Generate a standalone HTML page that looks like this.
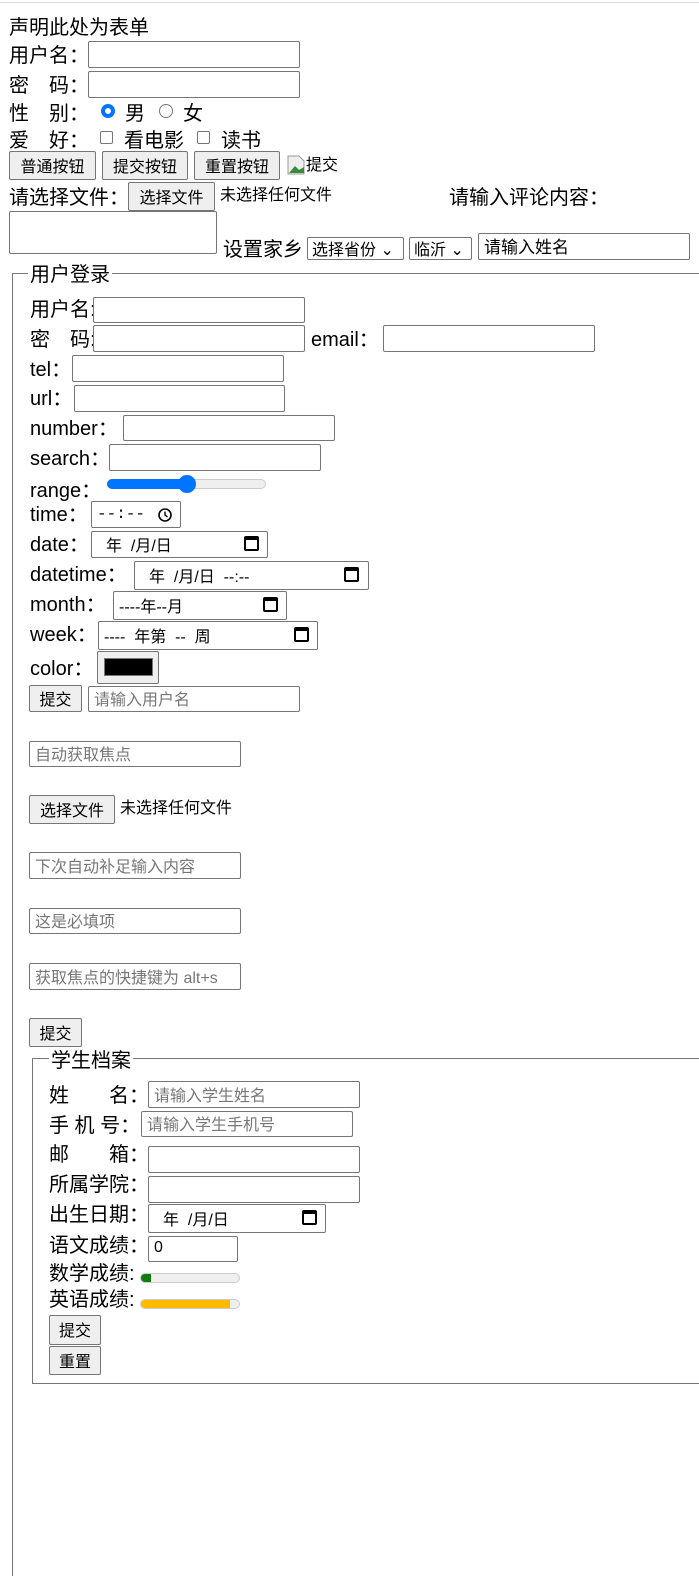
<!DOCTYPE html>
<html><head><meta charset="utf-8"><style>
*{box-sizing:border-box;margin:0;padding:0}
html,body{width:699px;height:1576px;background:#fff;overflow:hidden;position:relative;font-family:"Liberation Sans","Noto Sans CJK SC",sans-serif;color:#000}
.t{position:absolute;font-size:20px;line-height:22px;white-space:pre;transform:translateY(2px)}
.s{position:absolute;font-size:16px;line-height:18px;white-space:pre}
.i{position:absolute;border:1px solid #767676;border-radius:2px;background:#fff;font-size:16px;padding-left:5px;white-space:pre;overflow:hidden;display:flex;align-items:center;padding-bottom:2px}
.ph{color:#777}
.b{position:absolute;border:1px solid #767676;border-radius:2px;background:#efefef;font-size:16px;white-space:pre;display:flex;align-items:center;justify-content:center;padding-bottom:2px}
.rd{position:absolute;width:14px;height:14px;border:1px solid #767676;border-radius:50%;background:#fff}
.cb{position:absolute;width:13px;height:13px;border:1px solid #767676;border-radius:2px;background:#fff}
.cal{position:absolute;width:15px;height:15px;border:2px solid #000;border-top-width:4px;border-radius:2px}
.fs{position:absolute;border:1px solid #767676}
.lg{position:absolute;background:#fff;padding:0 2px;font-size:20px;line-height:22px}
</style></head><body>
<div style="position:absolute;left:0;top:2px;width:699px;height:1px;background:#ddd"></div>
<div class="t" style="left:9px;top:15px">声明此处为表单</div>
<div class="t" style="left:9px;top:43px">用户名：</div>
<div class="i" style="left:88px;top:41px;width:212px;height:27px"></div>
<div class="t" style="left:9px;top:73px">密　码：</div>
<div class="i" style="left:88px;top:71px;width:212px;height:27px"></div>
<div class="t" style="left:9px;top:101px">性　别：</div>
<div class="rd" style="left:101px;top:104px;border:4px solid #0075ff"></div>
<div class="t" style="left:125px;top:101px">男</div>
<div class="rd" style="left:159px;top:104px"></div>
<div class="t" style="left:183px;top:101px">女</div>
<div class="t" style="left:9px;top:128px">爱　好：</div>
<div class="cb" style="left:100px;top:131px"></div>
<div class="t" style="left:124px;top:128px">看电影</div>
<div class="cb" style="left:197px;top:131px"></div>
<div class="t" style="left:221px;top:128px">读书</div>
<div class="b" style="left:9px;top:151px;width:87px;height:29px">普通按钮</div>
<div class="b" style="left:102px;top:151px;width:86px;height:29px">提交按钮</div>
<div class="b" style="left:194px;top:151px;width:86px;height:29px">重置按钮</div>
<svg style="position:absolute;left:287px;top:155px" width="19" height="20"><path d="M1 1h11l5 5v13H1z" fill="#eee" stroke="#999"/><path d="M2 18l6-7 4 4 5-3v6z" fill="#3a8a3a"/></svg>
<div class="s" style="left:306px;top:157px">提交</div>
<div class="t" style="left:9px;top:185px">请选择文件：</div>
<div class="b" style="left:128px;top:182px;width:87px;height:29px">选择文件</div>
<div class="s" style="left:220px;top:187px">未选择任何文件</div>
<div class="t" style="left:449px;top:185px">请输入评论内容：</div>
<div class="i" style="left:9px;top:211px;width:208px;height:43px"></div>
<div class="t" style="left:223px;top:237px">设置家乡</div>
<div class="i" style="left:307px;top:237px;width:97px;height:23px;padding-left:4px">选择省份 ⌄</div>
<div class="i" style="left:409px;top:237px;width:63px;height:23px;padding-left:4px">临沂 ⌄</div>
<div class="i" style="left:478px;top:233px;width:212px;height:27px;font-size:17px">请输入姓名</div>

<div class="fs" style="left:12px;top:273px;width:700px;height:1320px"></div>
<div class="lg" style="left:28px;top:264px">用户登录</div>
<div class="t" style="left:30px;top:297px">用户名:</div>
<div class="i" style="left:93px;top:297px;width:212px;height:26px"></div>
<div class="t" style="left:30px;top:327px">密　码:</div>
<div class="i" style="left:93px;top:325px;width:212px;height:27px"></div>
<div class="t" style="left:311px;top:327px">email：</div>
<div class="i" style="left:383px;top:325px;width:212px;height:27px"></div>
<div class="t" style="left:30px;top:357px">tel：</div>
<div class="i" style="left:72px;top:355px;width:212px;height:27px"></div>
<div class="t" style="left:30px;top:386px">url：</div>
<div class="i" style="left:74px;top:385px;width:211px;height:27px"></div>
<div class="t" style="left:30px;top:416px">number：</div>
<div class="i" style="left:123px;top:415px;width:212px;height:26px"></div>
<div class="t" style="left:30px;top:446px">search：</div>
<div class="i" style="left:109px;top:444px;width:212px;height:27px"></div>
<div class="t" style="left:30px;top:478px">range：</div>
<div style="position:absolute;left:107px;top:479px;width:159px;height:10px;border:1px solid #ccc;border-radius:5px;background:#efefef"></div>
<div style="position:absolute;left:107px;top:479px;width:80px;height:10px;border-radius:5px;background:#0075ff"></div>
<div style="position:absolute;left:178px;top:475px;width:18px;height:18px;border-radius:50%;background:#0075ff"></div>
<div class="t" style="left:30px;top:502px">time：</div>
<div class="i" style="left:91px;top:501px;width:90px;height:27px;font-family:'Liberation Mono',monospace;font-size:16px">--:--</div>
<svg style="position:absolute;left:157px;top:507px" width="16" height="16"><circle cx="8" cy="8" r="6" fill="none" stroke="#000" stroke-width="1.6"/><path d="M8 4.5V8l2.5 2" fill="none" stroke="#000" stroke-width="1.4"/></svg>
<div class="t" style="left:30px;top:532px">date：</div>
<div class="i" style="left:91px;top:531px;width:177px;height:27px;padding-left:14px">年  /月/日</div>
<div class="cal" style="left:244px;top:536px"></div>
<div class="t" style="left:30px;top:562px">datetime：</div>
<div class="i" style="left:134px;top:561px;width:235px;height:29px;padding-left:14px">年  /月/日  --:--</div>
<div class="cal" style="left:344px;top:567px"></div>
<div class="t" style="left:30px;top:592px">month：</div>
<div class="i" style="left:113px;top:591px;width:174px;height:29px">----年--月</div>
<div class="cal" style="left:263px;top:597px"></div>
<div class="t" style="left:30px;top:622px">week：</div>
<div class="i" style="left:98px;top:621px;width:220px;height:29px">----  年第  --  周</div>
<div class="cal" style="left:294px;top:627px"></div>
<div class="t" style="left:30px;top:656px">color：</div>
<div class="b" style="left:97px;top:651px;width:62px;height:33px"></div>
<div style="position:absolute;left:104px;top:658px;width:49px;height:18px;background:#000;border:1px solid #777"></div>
<div class="b" style="left:29px;top:685px;width:53px;height:27px">提交</div>
<div class="i ph" style="left:88px;top:686px;width:212px;height:26px">请输入用户名</div>
<div class="i ph" style="left:29px;top:741px;width:212px;height:26px">自动获取焦点</div>
<div class="b" style="left:29px;top:795px;width:86px;height:29px">选择文件</div>
<div class="s" style="left:120px;top:800px">未选择任何文件</div>
<div class="i ph" style="left:29px;top:852px;width:212px;height:27px">下次自动补足输入内容</div>
<div class="i ph" style="left:29px;top:908px;width:212px;height:26px">这是必填项</div>
<div class="i ph" style="left:29px;top:963px;width:212px;height:27px">获取焦点的快捷键为 alt+s</div>
<div class="b" style="left:29px;top:1018px;width:53px;height:29px">提交</div>

<div class="fs" style="left:32px;top:1058px;width:680px;height:326px"></div>
<div class="lg" style="left:49px;top:1050px">学生档案</div>
<div class="t" style="left:49px;top:1083px">姓　　名：</div>
<div class="i ph" style="left:148px;top:1081px;width:212px;height:27px">请输入学生姓名</div>
<div class="t" style="left:49px;top:1113px">手 机 号：</div>
<div class="i ph" style="left:141px;top:1111px;width:212px;height:26px">请输入学生手机号</div>
<div class="t" style="left:49px;top:1142px">邮　　箱：</div>
<div class="i" style="left:148px;top:1146px;width:212px;height:27px"></div>
<div class="t" style="left:49px;top:1172px">所属学院：</div>
<div class="i" style="left:148px;top:1176px;width:212px;height:27px"></div>
<div class="t" style="left:49px;top:1202px">出生日期：</div>
<div class="i" style="left:148px;top:1204px;width:178px;height:29px;padding-left:14px">年  /月/日</div>
<div class="cal" style="left:302px;top:1210px"></div>
<div class="t" style="left:49px;top:1233px">语文成绩：</div>
<div class="i" style="left:148px;top:1236px;width:90px;height:26px">0</div>
<div class="t" style="left:49px;top:1261px">数学成绩:</div>
<div style="position:absolute;left:140px;top:1273px;width:100px;height:10px;border:1px solid #ccc;border-radius:5px;background:#efefef;overflow:hidden"><div style="width:10px;height:10px;background:#107c10"></div></div>
<div class="t" style="left:49px;top:1287px">英语成绩:</div>
<div style="position:absolute;left:140px;top:1299px;width:100px;height:10px;border:1px solid #ccc;border-radius:5px;background:#efefef;overflow:hidden"><div style="width:89px;height:10px;background:#ffb900"></div></div>
<div class="b" style="left:49px;top:1315px;width:52px;height:30px">提交</div>
<div class="b" style="left:49px;top:1346px;width:52px;height:29px">重置</div>
</body></html>
